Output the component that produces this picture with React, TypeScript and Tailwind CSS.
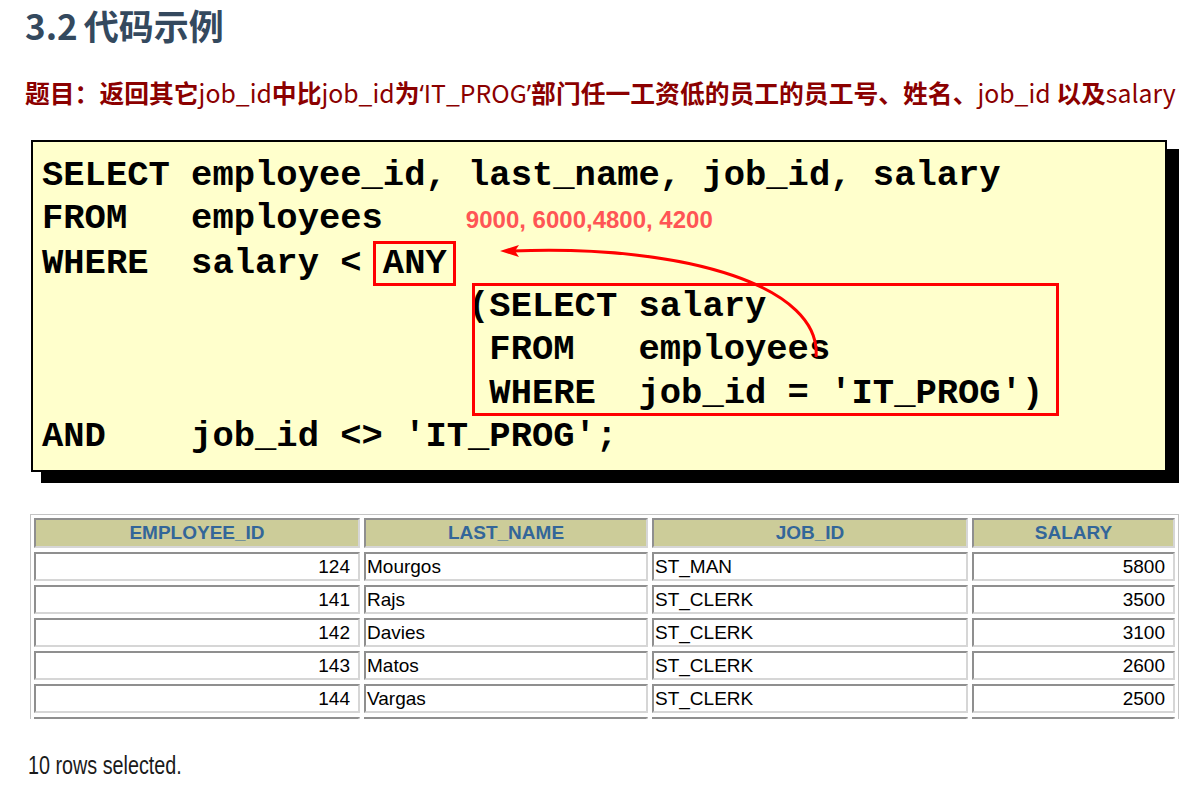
import React from "react";

const rows: [string, string, string, string][] = [
  ["124", "Mourgos", "ST_MAN", "5800"],
  ["141", "Rajs", "ST_CLERK", "3500"],
  ["142", "Davies", "ST_CLERK", "3100"],
  ["143", "Matos", "ST_CLERK", "2600"],
  ["144", "Vargas", "ST_CLERK", "2500"],
];

const cellBorder =
  "border-2 border-t-[#8f8f8f] border-l-[#8f8f8f] border-b-[#d6d6d6] border-r-[#d6d6d6]";

export default function App() {
  return (
    <div className="w-[1200px] h-[802px] bg-white overflow-hidden pl-[25px]">
      <h1 className="pt-[3px] text-[35px] leading-[44px] font-bold text-[#34495e] font-['Noto_Sans_CJK_SC',sans-serif]">
        <span>3.2</span>
        <span className="ml-[6px]">代码示例</span>
      </h1>
      <p className="mt-[27px] text-[24.8px] leading-[36px] font-bold text-[#8b0000] whitespace-nowrap font-['Noto_Sans_CJK_SC',sans-serif]">
        题目：返回其它<span className="font-normal">job_id</span>中比
        <span className="font-normal">job_id</span>为
        <span className="font-normal">
          <span className="font-['Noto_Sans',sans-serif]">‘</span>IT_PROG
          <span className="font-['Noto_Sans',sans-serif]">’</span>
        </span>
        部门任一工资低的员工的员工号、姓名、
        <span className="font-normal">job_id </span>以及
        <span className="font-normal">salary</span>
      </p>

      <div className="relative ml-[6px] mt-[29px] w-[1136px] border-2 border-black bg-[#ffffcc] shadow-[11px_10px_0_1px_#000] pt-[12px] pb-[12px] pl-[9px] font-['Liberation_Mono',monospace] font-bold text-[35.5px] leading-[43.33px] text-black whitespace-pre">
        <div>SELECT employee_id, last_name, job_id, salary</div>
        <div>
          FROM   employees
          <span className="ml-[83px] font-['Liberation_Sans',Arial,sans-serif] font-bold text-[24px] text-[#ff5555]">
            9000, 6000,4800, 4200
          </span>
        </div>
        <div>
          WHERE  salary &lt; <span className="relative">ANY<span className="absolute left-[-10px] right-[-9px] top-[-2px] bottom-[-2px] border-[3px] border-[#ff0000]" /></span>
        </div>
        <div className="relative">
          <div>{"                    (SELECT salary"}</div>
          <div>{"                     FROM   employees"}</div>
          <div>{"                     WHERE  job_id = 'IT_PROG')"}</div>
          <div className="absolute left-[430px] top-[-2px] w-[587px] h-[133px] border-[3px] border-[#ff0000]" />
        </div>
        <div>AND    job_id &lt;&gt; 'IT_PROG';</div>
        <svg
          className="absolute left-0 top-0 pointer-events-none"
          width="1132"
          height="328"
          viewBox="33 141 1132 328"
        >
          <path
            d="M 816 356 C 822 287, 690 243, 512 250"
            fill="none"
            stroke="#ff0000"
            strokeWidth="3"
          />
          <polygon points="500,250 519,244 515,250 519,256" fill="#ff0000" />
        </svg>
      </div>

      <div className="ml-[5px] mt-[42px] h-[205px] w-[1149px] overflow-hidden">
        <div className="grid grid-cols-[326px_284px_316px_203px] gap-[4px] p-[3px] border border-[#c4c4c4] font-['Liberation_Sans',Arial,sans-serif]">
          {["EMPLOYEE_ID", "LAST_NAME", "JOB_ID", "SALARY"].map((h) => (
            <div
              key={h}
              className={`h-[30px] bg-[#cccc99] ${cellBorder} flex items-center justify-center text-[#336699] font-bold text-[19px]`}
            >
              {h}
            </div>
          ))}
          {rows.map((r) => (
            <React.Fragment key={r[0]}>
              <div className={`h-[29px] bg-white ${cellBorder} flex items-center justify-end pr-[8px] text-[19px] text-black`}>
                {r[0]}
              </div>
              <div className={`h-[29px] bg-white ${cellBorder} flex items-center pl-[1px] text-[19px] text-black`}>
                {r[1]}
              </div>
              <div className={`h-[29px] bg-white ${cellBorder} flex items-center pl-[1px] text-[19px] text-black`}>
                {r[2]}
              </div>
              <div className={`h-[29px] bg-white ${cellBorder} flex items-center justify-end pr-[8px] text-[19px] text-black`}>
                {r[3]}
              </div>
            </React.Fragment>
          ))}
          <div className={`h-[29px] bg-white ${cellBorder}`} />
          <div className={`h-[29px] bg-white ${cellBorder}`} />
          <div className={`h-[29px] bg-white ${cellBorder}`} />
          <div className={`h-[29px] bg-white ${cellBorder}`} />
        </div>
      </div>

      <p className="ml-[3px] mt-[31px] text-[26px] leading-[30px] text-[#1a1a1a] font-['Liberation_Sans',Arial,sans-serif]">
        <span className="inline-block origin-left scale-x-[0.76]">10 rows selected.</span>
      </p>
    </div>
  );
}
